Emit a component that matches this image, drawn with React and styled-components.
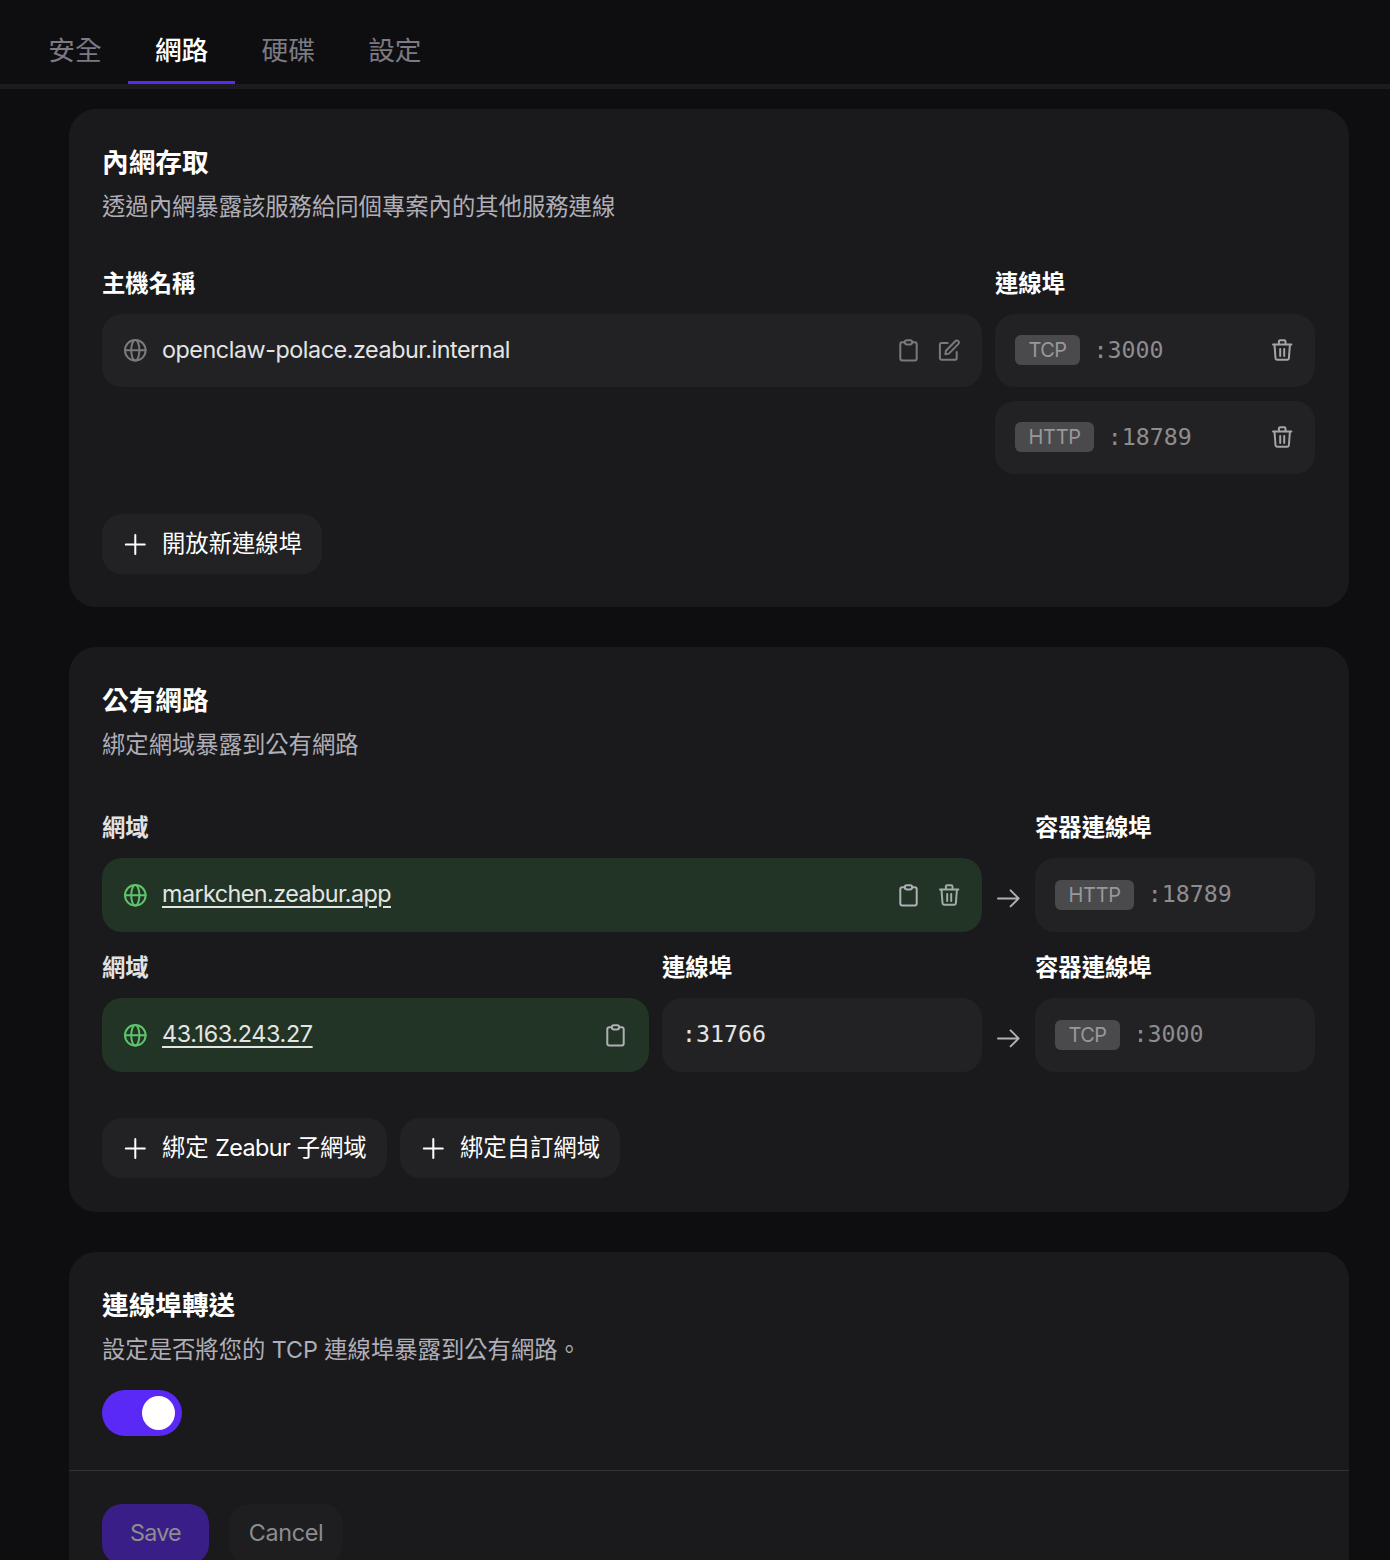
import React, { useState } from 'react';
import styled, { createGlobalStyle } from 'styled-components';

const GlobalStyle = createGlobalStyle`
    * {
        box-sizing: border-box;
    }
    body {
        margin: 0;
        background: #0e0e10;
        color: #fff;
        font-family: Inter, 'Noto Sans CJK TC', sans-serif;
        font-size: 23.33px;
        overflow: hidden;
    }
`;

const Page = styled.div`
    width: 1390px;
    height: 1560px;
    overflow: hidden;
`;

const TabBar = styled.nav`
    display: flex;
    height: 89px;
    padding-left: 21.6px;
    border-bottom: 5px solid #1c1c1e;
`;

const Tab = styled.button`
    height: 84px;
    padding: 18px 26.67px 0;
    border: none;
    border-bottom: 3px solid ${props => props.$active ? '#5b29f5' : 'transparent'};
    background: none;
    color: ${props => props.$active ? '#fff' : '#7c7a83'};
    font-family: inherit;
    font-size: 26.67px;
    font-weight: ${props => props.$active ? 500 : 400};
    line-height: 36px;
`;

const Content = styled.main`
    display: flex;
    flex-direction: column;
    gap: 40px;
    padding: 20px 41px 0 69px;
`;

const Card = styled.section`
    height: ${props => props.$height}px;
    border-radius: 27px;
    background: #1a1a1c;
`;

const CardBody = styled.div`
    padding: 33px 34px 0 33px;
`;

const Title = styled.h2`
    margin: 0;
    font-size: 26.67px;
    font-weight: 700;
    line-height: 40px;
`;

const Description = styled.p`
    margin: 8px 0 0;
    color: #b0aeb6;
    line-height: 34px;
`;

const Columns = styled.div`
    display: flex;
    gap: 13px;
    margin-top: ${props => props.$top}px;
`;

const Column = styled.div`
    display: flex;
    flex-direction: column;
    width: ${props => props.$width}px;
    gap: 14px;
`;

const Label = styled.div`
    height: 34px;
    padding-top: 1px;
    color: ${props => props.$dim ? '#e2e2e3' : '#fff'};
    font-weight: 700;
    line-height: 34px;
`;

const Field = styled.div`
    display: flex;
    align-items: center;
    height: ${props => props.$height || 73}px;
    padding: 0 21px 1px 20px;
    border-radius: 20px;
    background: ${props => props.$bound ? '#213426' : '#222224'};
`;

const Host = styled.span`
    margin-left: 14px;
    margin-right: auto;
    padding-bottom: ${props => props.$link ? 2 : 0}px;
    color: #e4e4e5;
    line-height: 34px;
    letter-spacing: ${props => props.$tracking}px;
    text-decoration: ${props => props.$link ? 'underline' : 'none'};
    text-decoration-thickness: 2px;
    text-underline-offset: 4px;
`;

const Badge = styled.span`
    height: 30px;
    padding: 0 13.5px;
    border-radius: 6px;
    background: #4a4a4c;
    color: #98989a;
    font-size: 20px;
    line-height: 30px;
    letter-spacing: ${props => props.$tracking || 0}px;
`;

const Port = styled.span`
    margin-left: ${props => props.$bright ? 0 : 13.5}px;
    margin-right: auto;
    padding-bottom: 1px;
    color: ${props => props.$bright ? '#e4e4e5' : '#8d8d8f'};
    font-family: 'DejaVu Sans Mono', monospace;
    font-size: 23.25px;
    line-height: 34px;
`;

const Icon = styled.svg`
    flex: none;
    width: 26px;
    height: 26px;
    margin-left: ${props => props.$gap || 0}px;
    color: ${props => props.$color || '#7a7a7c'};
    fill: none;
    stroke: currentColor;
    stroke-width: 2;
    stroke-linecap: round;
    stroke-linejoin: round;
`;

const ArrowCell = styled.div`
    display: flex;
    align-items: flex-end;
    justify-content: center;
    width: 26px;
    margin-right: 1px;
    padding-bottom: 21px;
`;

const Actions = styled.div`
    display: flex;
    gap: 13px;
    margin-top: ${props => props.$top}px;
`;

const AddButton = styled.button`
    display: flex;
    align-items: center;
    gap: 14px;
    width: ${props => props.$width}px;
    height: 60px;
    padding: 0 0 0 20px;
    border: none;
    border-radius: 20px;
    background: #222224;
    color: #fff;
    font-family: inherit;
    font-size: 23.33px;
    white-space: nowrap;
`;

const AddLabel = styled.span`
    padding-bottom: 4px;
`;

const Latin = styled.span`
    letter-spacing: ${props => props.$tracking}px;
`;

const Switch = styled.button`
    display: flex;
    justify-content: ${props => props.$on ? 'flex-end' : 'flex-start'};
    align-items: center;
    width: 80px;
    height: 46px;
    margin-top: 23px;
    padding: 0 7px;
    border: none;
    border-radius: 23px;
    background: ${props => props.$on ? '#5b29f5' : '#3a3a3c'};
`;

const Knob = styled.span`
    width: 33px;
    height: 34px;
    border-radius: 50%;
    background: #fff;
`;

const Footer = styled.div`
    display: flex;
    gap: 20px;
    margin-top: 34px;
    padding: 33px;
    border-top: 1px solid #333335;
`;

const FormButton = styled.button`
    width: ${props => props.$primary ? 107 : 114}px;
    height: 60px;
    padding: 0 0 3px;
    border: none;
    border-radius: 20px;
    background: ${props => props.$primary ? '#3a1e87' : '#1e1e20'};
    color: #8d8c8f;
    font-family: inherit;
    font-size: 23.33px;
    letter-spacing: ${props => props.$primary ? -0.8 : -0.3}px;
`;

function Globe({ color }) {
    return (
        <Icon viewBox="0 0 26 26" $color={color}>
            <circle cx="13.3" cy="13.3" r="10.3" />
            <ellipse cx="13.3" cy="13.3" rx="4.1" ry="10.3" />
            <path d="M3 13.3h20.6" />
        </Icon>
    );
}

function Clipboard({ color }) {
    return (
        <Icon viewBox="0 0 26 26" $color={color}>
            <path d="M9.8 5.3H7.3a2 2 0 0 0-2 2v14.3a2 2 0 0 0 2 2h12.400a2 2 0 0 0 2-2V7.300a2 2 0 0 0-2-2h-2.500" />
            <rect x="9.8" y="3.200" width="7.400" height="4.200" rx="2.100" />
        </Icon>
    );
}

function Edit() {
    return (
        <Icon viewBox="0 0 26 26" $gap={14}>
            <path d="M12.700 6H6.700a1.800 1.800 0 0 0-1.800 1.800v13.100a1.800 1.800 0 0 0 1.800 1.800h13.200a1.800 1.800 0 0 0 1.800-1.800V15" />
            <path d="M10.400 17.400l.5-3.700L20.500 4a1.900 1.900 0 0 1 2.700 0l.2.200a1.900 1.900 0 0 1 0 2.700l-9.500 9.700z" />
        </Icon>
    );
}

function Trash({ color, gap }) {
    return (
        <Icon viewBox="0 0 26 26" $color={color} $gap={gap}>
            <path d="M5 7.500h18.400" />
            <path d="M10.900 7.200V4.500c0-.8.5-1.300 1.300-1.300h4c.8 0 1.300.5 1.300 1.300v2.700" />
            <path d="M6.500 7.700l1 13.300c.1 1.200.8 1.800 1.900 1.800H19c1.100 0 1.800-.6 1.900-1.800l1-13.300" />
            <path d="M12.200 12v6.900M16.200 12v6.900" />
        </Icon>
    );
}

function Plus() {
    return (
        <Icon viewBox="0 0 26 26" $color="#fff">
            <path d="M13.3 3.900v19M3.800 13.400h19" />
        </Icon>
    );
}

function Arrow() {
    return (
        <ArrowCell>
            <Icon viewBox="0 0 26 26" $color="#b0aeb6">
                <path d="M3 13.400h20.600M15.600 5.400l8 8-8 8" />
            </Icon>
        </ArrowCell>
    );
}

function PortField({ type, port, height, removable }) {
    return (
        <Field $height={height}>
            <Badge $tracking={type === 'TCP' ? -0.6 : -0.3}>{type}</Badge>
            <Port>:{port}</Port>
            {removable && <Trash color="#a5a4a9" />}
        </Field>
    );
}

export default function App() {
    const [tab, setTab] = useState('網路');
    const [forwarding, setForwarding] = useState(true);

    return (
        <Page>
            <GlobalStyle />
            <TabBar>
                {['安全', '網路', '硬碟', '設定'].map(name => (
                    <Tab key={name} $active={name === tab} onClick={() => setTab(name)}>
                        {name}
                    </Tab>
                ))}
            </TabBar>
            <Content>
                <Card $height={498}>
                    <CardBody>
                        <Title>內網存取</Title>
                        <Description>透過內網暴露該服務給同個專案內的其他服務連線</Description>
                        <Columns $top={42}>
                            <Column $width={880}>
                                <Label>主機名稱</Label>
                                <Field>
                                    <Globe />
                                    <Host $tracking={-0.45}>openclaw-polace.zeabur.internal</Host>
                                    <Clipboard />
                                    <Edit />
                                </Field>
                            </Column>
                            <Column $width={320}>
                                <Label>連線埠</Label>
                                <PortField type="TCP" port="3000" removable />
                                <PortField type="HTTP" port="18789" removable />
                            </Column>
                        </Columns>
                        <Actions $top={40}>
                            <AddButton $width={220}><Plus /><AddLabel>開放新連線埠</AddLabel></AddButton>
                        </Actions>
                    </CardBody>
                </Card>

                <Card $height={565}>
                    <CardBody>
                        <Title>公有網路</Title>
                        <Description>綁定網域暴露到公有網路</Description>
                        <Columns $top={48}>
                            <Column $width={880}>
                                <Label $dim>網域</Label>
                                <Field $height={74} $bound>
                                    <Globe color="#5fc46a" />
                                    <Host $link $tracking={-0.55}>markchen.zeabur.app</Host>
                                    <Clipboard color="#b0aeb6" />
                                    <Trash color="#a3ada5" gap={14} />
                                </Field>
                            </Column>
                            <Arrow />
                            <Column $width={280}>
                                <Label>容器連線埠</Label>
                                <PortField type="HTTP" port="18789" height={74} />
                            </Column>
                        </Columns>
                        <Columns $top={18}>
                            <Column $width={547}>
                                <Label $dim>網域</Label>
                                <Field $height={74} $bound>
                                    <Globe color="#5fc46a" />
                                    <Host $link $tracking={-0.35}>43.163.243.27</Host>
                                    <Clipboard color="#b0aeb6" />
                                </Field>
                            </Column>
                            <Column $width={320}>
                                <Label>連線埠</Label>
                                <Field $height={74}>
                                    <Port $bright>:31766</Port>
                                </Field>
                            </Column>
                            <Arrow />
                            <Column $width={280}>
                                <Label>容器連線埠</Label>
                                <PortField type="TCP" port="3000" height={74} />
                            </Column>
                        </Columns>
                        <Actions $top={46}>
                            <AddButton $width={285}>
                                <Plus />
                                <AddLabel>綁定 <Latin $tracking={-0.6}>Zeabur</Latin> 子網域</AddLabel>
                            </AddButton>
                            <AddButton $width={220}><Plus /><AddLabel>綁定自訂網域</AddLabel></AddButton>
                        </Actions>
                    </CardBody>
                </Card>

                <Card $height={346}>
                    <CardBody>
                        <Title>連線埠轉送</Title>
                        <Description>
                            設定是否將您的 <Latin $tracking={-0.15}>TCP</Latin> 連線埠暴露到公有網路。
                        </Description>
                        <Switch $on={forwarding} onClick={() => setForwarding(!forwarding)}>
                            <Knob />
                        </Switch>
                    </CardBody>
                    <Footer>
                        <FormButton $primary>Save</FormButton>
                        <FormButton>Cancel</FormButton>
                    </Footer>
                </Card>
            </Content>
        </Page>
    );
}
